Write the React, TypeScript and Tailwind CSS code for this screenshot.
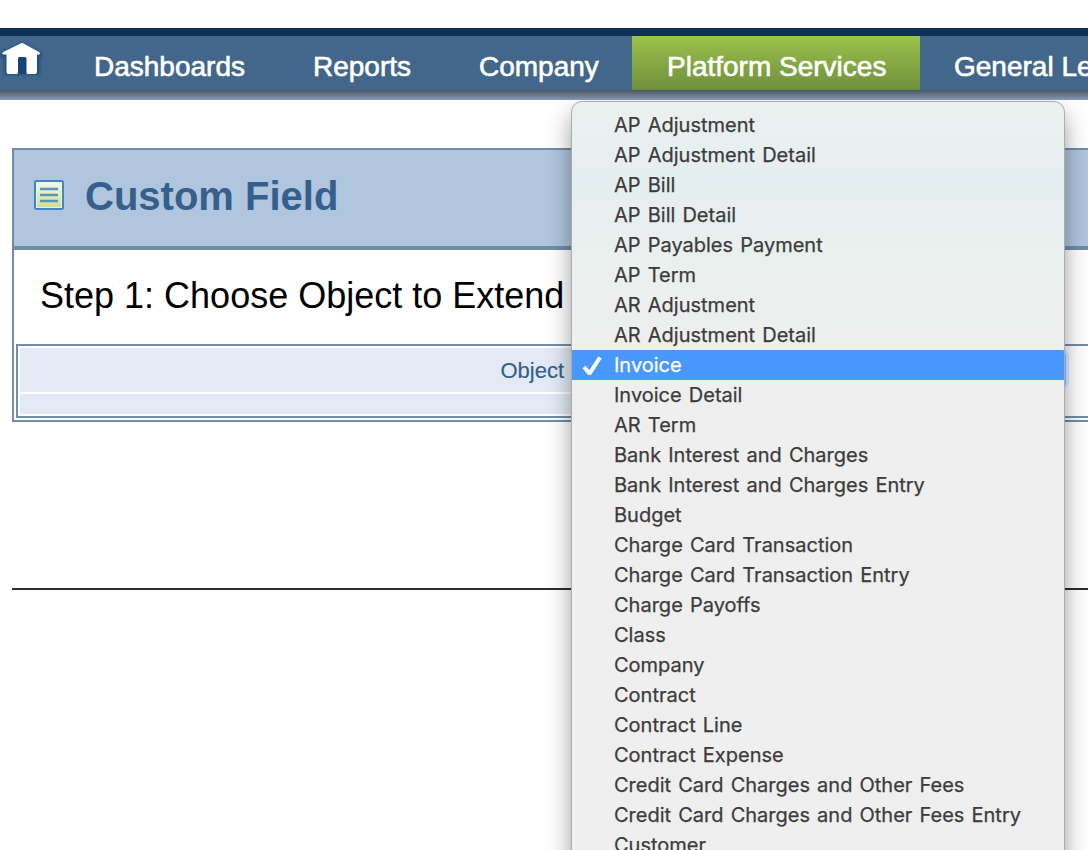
const navItems = [
  { label: "Dashboards", className: "w-[219px] pl-[34px]" },
  { label: "Reports", className: "w-[166px] pl-[34px]" },
  { label: "Company", className: "w-[187px] pl-[34px]" },
  {
    label: "Platform Services",
    className: "w-[288px] pl-[35px] bg-linear-to-b from-[#9bc24b] to-[#708f3c]",
  },
  { label: "General Ledger", className: "w-[260px] pl-[34px]" },
];

const objects = [
  "AP Adjustment",
  "AP Adjustment Detail",
  "AP Bill",
  "AP Bill Detail",
  "AP Payables Payment",
  "AP Term",
  "AR Adjustment",
  "AR Adjustment Detail",
  "Invoice",
  "Invoice Detail",
  "AR Term",
  "Bank Interest and Charges",
  "Bank Interest and Charges Entry",
  "Budget",
  "Charge Card Transaction",
  "Charge Card Transaction Entry",
  "Charge Payoffs",
  "Class",
  "Company",
  "Contract",
  "Contract Line",
  "Contract Expense",
  "Credit Card Charges and Other Fees",
  "Credit Card Charges and Other Fees Entry",
  "Customer",
];

function HomeIcon() {
  return (
    <svg className="h-[42px] w-[44px] shrink-0" viewBox="0 0 44 42">
      <defs>
        <filter id="glow" x="-20%" y="-20%" width="140%" height="140%">
          <feGaussianBlur stdDeviation="1.8" />
        </filter>
      </defs>
      <path
        d="M22 6 41 17v3h-2v17H5V20H1v-3Z"
        fill="#245080"
        stroke="#245080"
        strokeWidth="2"
        filter="url(#glow)"
      />
      <path d="M17 19h10v18H17Z" fill="#174577" />
      <path
        d="M22 6c.7 0 1.200.2 2 .7L39 15c1.300.8 1 2.300.2 2.600H37V35q0 2-2 2h-7q-1.500 0-1.500-1.500V21.500q0-1.500-1.500-1.500h-5.500q-1.500 0-1.500 1.500V35.500q0 1.500-1.500 1.500H8.500q-2 0-2-2V17.600H3.500c-1.500-.3-1.500-1.800-.2-2.600L20 6.700c.8-.5 1.300-.7 2-.7Z"
        fill="#fff"
      />
    </svg>
  );
}

function ListIcon() {
  return (
    <svg className="h-[30px] w-[30px] shrink-0" viewBox="0 0 30 30">
      <defs>
        <linearGradient id="sheet" x1="0" y1="0" x2="0" y2="1">
          <stop offset="0" stopColor="#f6fbe9" />
          <stop offset="1" stopColor="#c9df91" />
        </linearGradient>
      </defs>
      <rect x="1" y="1" width="28" height="28" rx="1.500" fill="url(#sheet)" stroke="#4585c5" strokeWidth="2" />
      <rect x="2.500" y="2.500" width="25" height="25" fill="none" stroke="#eef5d9" opacity=".8" />
      <path d="M6 9h18M6 15h18M6 21h18" stroke="#5c94bd" strokeWidth="2.600" />
    </svg>
  );
}

function ObjectMenu() {
  return (
    <div className="absolute top-[101px] left-[571px] h-[790px] w-[494px] overflow-hidden rounded-t-[11px] border border-[#acacac] bg-[linear-gradient(180deg,#ebf1ef_0px,#e5eef0_80px,#eaf0ed_160px,#efefef_250px)] pt-[8px] font-[Inter,sans-serif] text-[20px] leading-[30px] text-[#3c3c3c] [word-spacing:1.5px] [-webkit-text-stroke:0.25px_currentColor]">
      {objects.map((name) =>
        name === "Invoice" ? (
          <div key={name} className="flex h-[30px] items-center bg-[#4898fd] text-white">
            <svg className="ml-[10px] h-[20px] w-[20px]" viewBox="0 0 20 20">
              <path d="m2 12 5.500 6.500L18 2.500" fill="none" stroke="#fff" strokeWidth="4" />
            </svg>
            <span className="pl-[12px]">{name}</span>
          </div>
        ) : (
          <div key={name} className="h-[30px] whitespace-nowrap pl-[42px]">
            {name}
          </div>
        ),
      )}
    </div>
  );
}

export default function App() {
  return (
    <div className="relative h-[850px] w-[1088px] overflow-hidden bg-white font-['Liberation_Sans',Arial,sans-serif]">
      <div className="h-[28px]" />
      <nav className="h-[72px] border-t-8 border-[#0c3154] bg-[#42678b]">
        <div className="flex h-[54px]">
          <div className="w-[60px] shrink-0 pt-[1px]">
            <HomeIcon />
          </div>
          {navItems.map((item) => (
            <div
              key={item.label}
              className={`h-[54px] shrink-0 whitespace-nowrap text-[28px] leading-[61px] text-white [-webkit-text-stroke:0.6px_white] ${item.className}`}
            >
              {item.label}
            </div>
          ))}
        </div>
        <div className="h-[10px] bg-linear-to-b from-[#4b5664] to-[#8799b8]" />
      </nav>
      <main className="pt-[48px] pl-[12px]">
        <section className="h-[274px] w-[1100px] border-2 border-[#718da8]">
          <header className="flex h-[100px] items-center border-b-4 border-[#718da8] bg-[#b0c5de] pl-[20px]">
            <div className="mt-[-6px]">
              <ListIcon />
            </div>
            <h1 className="mt-[-4px] pl-[21px] text-[40px] leading-[48px] font-bold text-[#365f8b]">Custom Field</h1>
          </header>
          <h2 className="h-[94px] pl-[26px] text-[36px] leading-[92px] text-black">Step 1: Choose Object to Extend</h2>
          <div className="ml-[2px] flex h-[74px] flex-col gap-[2px] border-2 border-[#718da8] p-[2px]">
            <div className="flex h-[44px] bg-[#e3eaf5]">
              <div className="w-[560px] pr-[16px] text-right text-[22px] leading-[45px] text-[#365f8b] [-webkit-text-stroke:0.2px_currentColor]">
                Object
              </div>
              <div className="flex-1 bg-white" />
            </div>
            <div className="flex h-[20px] bg-[#e3eaf5]">
              <div className="w-[560px]" />
              <div className="flex-1 bg-white" />
            </div>
          </div>
        </section>
        <div className="mt-[166px] h-[2px] bg-[#2d2d2d]" />
      </main>
      <div className="absolute top-[100px] right-0 bottom-0 left-0 overflow-hidden">
        <div className="absolute top-[2px] left-[572px] h-[800px] w-[492px] rounded-t-[10px] shadow-[0_12px_24px_rgba(0,0,0,0.42)]" />
      </div>
      <div className="absolute top-[349px] left-[1050px] h-[41px] w-[19px] rounded-r-[8px] border-r-3 border-[#b4cce8] bg-[#6d9fdb]" />
      <ObjectMenu />
    </div>
  );
}
